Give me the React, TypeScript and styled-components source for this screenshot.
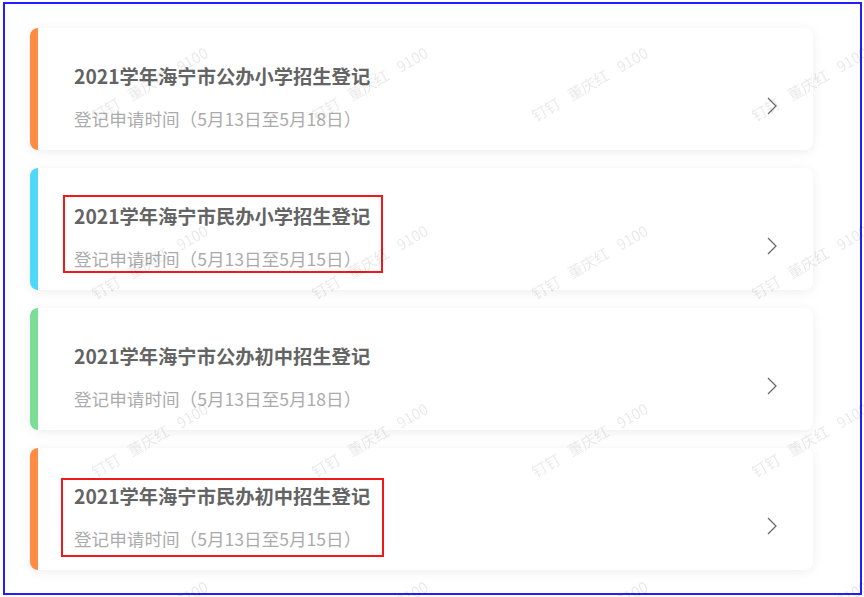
import React, {FC} from 'react';
import styled, {createGlobalStyle} from 'styled-components';

const GlobalStyle = createGlobalStyle`
  html, body {
    margin: 0;
    padding: 0;
    background: #fff;
    font-family: "Noto Sans CJK SC", "Noto Sans", sans-serif;
  }
`;

interface Registration {
  id: string;
  title: string;
  period: string;
  color: string;
  mark?: string;
}

const ITEMS: Registration[] = [
  {id: 'pub-primary', title: '2021学年海宁市公办小学招生登记', period: '登记申请时间（5月13日至5月18日）', color: '#ff8c45'},
  {id: 'pri-primary', title: '2021学年海宁市民办小学招生登记', period: '登记申请时间（5月13日至5月15日）', color: '#4fd8f8', mark: '-7px -13px -2px -11px'},
  {id: 'pub-middle', title: '2021学年海宁市公办初中招生登记', period: '登记申请时间（5月13日至5月18日）', color: '#7bde97'},
  {id: 'pri-middle', title: '2021学年海宁市民办初中招生登记', period: '登记申请时间（5月13日至5月15日）', color: '#ff8c45', mark: '-4px -14px -6px -13px'},
];

const Frame = styled.div`
  box-sizing: border-box;
  margin: 2px 0 0 3px;
  width: 859px;
  height: 593px;
  border: 2px solid #1f1fff;
  padding: 24px 47px 0 25px;
  display: flex;
  flex-direction: column;
  gap: 18px;
  overflow: hidden;
`;

const Card = styled.div`
  display: flex;
  height: 122px;
  background: #fff;
  border-radius: 8px;
  overflow: hidden;
  box-shadow: 0 2px 12px rgba(0, 0, 0, 0.07);
  cursor: pointer;
`;

const Bar = styled.div<{$color: string}>`
  width: 8px;
  flex-shrink: 0;
  background: ${p => p.$color};
`;

const Body = styled.div`
  flex: 1;
  display: flex;
  align-items: center;
  padding: 0 36px;
`;

const Text = styled.div<{$mark?: string}>`
  position: relative;
  width: fit-content;
  align-self: flex-start;
  margin-top: 34px;
  display: flex;
  flex-direction: column;
  gap: 17px;

  ${p => p.$mark && `
    &::after {
      content: '';
      position: absolute;
      inset: ${p.$mark};
      border: 2px solid #f01818;
      pointer-events: none;
    }
  `}
`;

const Title = styled.div`
  font-size: 19.3px;
  line-height: 28px;
  font-weight: 700;
  color: #646464;
  white-space: nowrap;
`;

const Period = styled.div`
  font-size: 17.6px;
  line-height: 24px;
  color: #ababab;
  white-space: nowrap;
`;

const Arrow = styled.svg`
  margin-left: auto;
  margin-top: 34px;
  width: 10px;
  height: 18px;
  flex-shrink: 0;
`;

const Watermark = styled.div`
  position: fixed;
  top: -6px;
  left: -180px;
  display: grid;
  grid-template-columns: repeat(5, 220px);
  grid-auto-rows: 178px;
  pointer-events: none;
`;

const Tile = styled.div`
  display: flex;
  align-items: center;
  justify-content: center;
`;

const Stamp = styled.span`
  transform: rotate(-30deg);
  font-size: 15px;
  word-spacing: 8px;
  color: rgba(0, 0, 0, 0.09);
  white-space: nowrap;
`;

const Chevron: FC = () => (
  <Arrow viewBox="0 0 10 18">
    <path d="M1 1 L9 9 L1 17" fill="none" stroke="#6a6a6a" strokeWidth="1.3" />
  </Arrow>
);

const App: FC = () => (
  <>
    <GlobalStyle />
    <Frame>
      {ITEMS.map(item => (
        <Card key={item.id}>
          <Bar $color={item.color} />
          <Body>
            <Text $mark={item.mark}>
              <Title>{item.title}</Title>
              <Period>{item.period}</Period>
            </Text>
            <Chevron />
          </Body>
        </Card>
      ))}
    </Frame>
    <Watermark>
      {Array.from({length: 20}, (_, i) => (
        <Tile key={i}>
          <Stamp>钉钉 董庆红 9100</Stamp>
        </Tile>
      ))}
    </Watermark>
  </>
);

export default App;
